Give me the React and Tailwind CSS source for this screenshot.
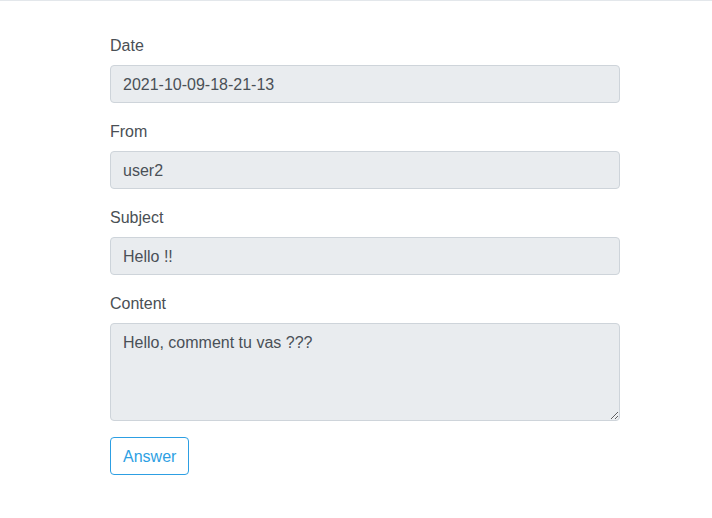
export default function App() {
  const fields = [
    { label: "Date", value: "2021-10-09-18-21-13" },
    { label: "From", value: "user2" },
    { label: "Subject", value: "Hello !!" },
  ];
  return (
    <div className="min-h-[518px] bg-white border-t border-[#e3e7eb] font-['Liberation_Sans',Arial,sans-serif] text-base">
      <div className="ml-[110px] w-[510px] pt-8">
        {fields.map((f) => (
          <div key={f.label} className="mb-4">
            <label className="block pt-px mb-[7px] leading-6 text-[#4a4f55]">{f.label}</label>
            <input
              readOnly
              value={f.value}
              className="block w-full h-[38px] px-3 pt-[7px] pb-[5px] rounded border border-[#ced4da] bg-[#e9ecef] text-[#495057] leading-6 outline-none"
            />
          </div>
        ))}
        <div className="mb-4">
          <label className="block pt-px mb-[7px] leading-6 text-[#4a4f55]">Content</label>
          <textarea
            readOnly
            value="Hello, comment tu vas ???"
            className="block w-full h-[98px] px-3 pt-[7px] pb-1 rounded border border-[#ced4da] bg-[#e9ecef] text-[#495057] leading-6 outline-none resize-y"
          />
        </div>
        <button className="h-[38px] px-3 pt-[7px] pb-[5px] rounded border border-[#2d9fe3] text-[#2d9fe3] leading-6 bg-white">
          Answer
        </button>
      </div>
    </div>
  );
}
